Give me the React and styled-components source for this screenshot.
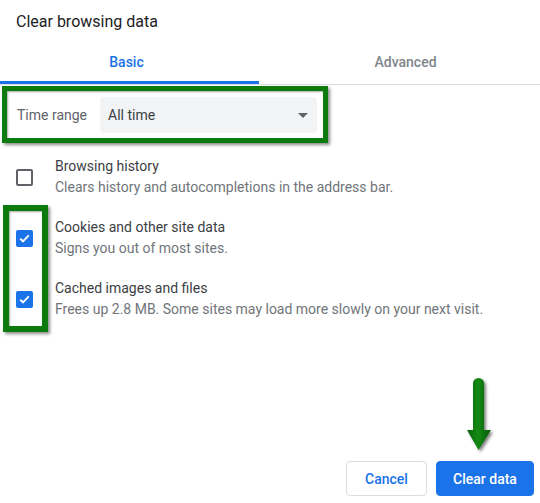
import React from 'react';
import styled, { createGlobalStyle } from 'styled-components';

const GlobalStyle = createGlobalStyle`
  body {
    margin: 0;
    background: #ffffff;
    font-family: Roboto, 'Liberation Sans', sans-serif;
  }
`;

const Dialog = styled.div`
  position: relative;
  width: 540px;
  height: 503px;
  display: flex;
  flex-direction: column;
  background: #ffffff;
  overflow: hidden;
`;

const Title = styled.h1`
  margin: 0;
  padding: 12px 16px 0;
  font-size: 16px;
  line-height: 20px;
  font-weight: 400;
  color: #202124;
`;

const TabBar = styled.div`
  display: flex;
  margin-top: 7px;
  border-bottom: 1px solid #dadce0;
`;

const Tab = styled.div`
  width: ${(props) => props.width};
  flex: ${(props) => (props.grow ? 1 : 'none')};
  height: 45px;
  box-sizing: border-box;
  padding: ${(props) => props.pad};
  display: flex;
  align-items: center;
  justify-content: center;
  font-size: 14px;
  font-weight: 500;
  color: ${(props) => (props.active ? '#1a73e8' : '#80868b')};
  box-shadow: ${(props) => (props.active ? 'inset 0 -3px 0 #1a73e8' : 'none')};
`;

const Highlight = styled.div`
  box-sizing: border-box;
  border: 5px solid #0d7a0d;
  box-shadow: 2px 2px 3px rgba(0, 0, 0, 0.45), inset 1px 1px 2px rgba(0, 0, 0, 0.35);
`;

const RangeRow = styled(Highlight)`
  width: 326px;
  margin: 1px 0 0 2px;
  padding: 6px 6px 5px 10px;
  display: flex;
  align-items: center;
`;

const RangeLabel = styled.span`
  width: 83px;
  font-size: 14px;
  color: #5f6368;
`;

const Select = styled.div`
  flex: 1;
  height: 36px;
  border-radius: 4px;
  background: #f1f3f4;
  display: flex;
  align-items: center;
  justify-content: space-between;
  padding: 0 9px 0 8px;
  font-size: 14px;
  color: #3c4043;
`;

const Caret = styled.span`
  width: 0;
  height: 0;
  border-left: 5px solid transparent;
  border-right: 5px solid transparent;
  border-top: 5px solid #5f6368;
`;

const List = styled.div`
  position: relative;
  margin-top: 13px;
`;

const Row = styled.div`
  display: flex;
  height: 61px;
  align-items: flex-start;
`;

const BoxCell = styled.div`
  width: 55px;
  height: 42px;
  display: flex;
  align-items: center;
  padding-left: 16px;
  box-sizing: border-box;
`;

const Box = styled.div`
  width: 17px;
  height: 17px;
  box-sizing: border-box;
  border-radius: 2px;
  border: ${(props) => (props.checked ? 'none' : '2px solid #5f6368')};
  background: ${(props) => (props.checked ? '#1a73e8' : 'transparent')};
  display: flex;
  align-items: center;
  justify-content: center;
`;

const RowText = styled.div`
  display: flex;
  flex-direction: column;
`;

const RowTitle = styled.span`
  font-size: 14px;
  line-height: 20px;
  color: #3c4043;
`;

const RowSub = styled.span`
  font-size: 14px;
  line-height: 22px;
  color: #70757a;
`;

const CheckHighlight = styled(Highlight)`
  position: absolute;
  left: 3px;
  top: 49px;
  width: 45px;
  height: 127px;
  border-width: 6px;
`;

const Footer = styled.div`
  margin-top: auto;
  display: flex;
  justify-content: flex-end;
  gap: 9px;
  padding: 0 6px 7px 0;
`;

const Button = styled.button`
  height: 35px;
  width: ${(props) => props.width};
  border-radius: 4px;
  font-family: Roboto, 'Liberation Sans', sans-serif;
  font-size: 14px;
  font-weight: 500;
  border: 1px solid ${(props) => (props.primary ? '#1a73e8' : '#dadce0')};
  background: ${(props) => (props.primary ? '#1a73e8' : '#ffffff')};
  color: ${(props) => (props.primary ? '#ffffff' : '#1a73e8')};
`;

const Arrow = styled.svg`
  position: absolute;
  left: 464px;
  top: 375px;
  filter: drop-shadow(2px 2px 1.5px rgba(0, 0, 0, 0.5));
`;

const items = [
  { title: 'Browsing history', sub: 'Clears history and autocompletions in the address bar.', checked: false },
  { title: 'Cookies and other site data', sub: 'Signs you out of most sites.', checked: true },
  { title: 'Cached images and files', sub: 'Frees up 2.8 MB. Some sites may load more slowly on your next visit.', checked: true },
];

const Check = () => (
  <svg width="11" height="9" viewBox="0 0 11 9">
    <path d="M1.2 4.6 L4 7.3 L9.8 1.4" fill="none" stroke="#ffffff" strokeWidth="1.9" />
  </svg>
);

const App = () => (
  <Dialog>
    <GlobalStyle />
    <Title>Clear browsing data</Title>
    <TabBar>
      <Tab active width="259px" pad="0 6px 0 0">Basic</Tab>
      <Tab grow pad="0 0 0 12px">Advanced</Tab>
    </TabBar>
    <RangeRow>
      <RangeLabel>Time range</RangeLabel>
      <Select>
        All time
        <Caret />
      </Select>
    </RangeRow>
    <List>
      {items.map((item) => (
        <Row key={item.title}>
          <BoxCell>
            <Box checked={item.checked}>{item.checked && <Check />}</Box>
          </BoxCell>
          <RowText>
            <RowTitle>{item.title}</RowTitle>
            <RowSub>{item.sub}</RowSub>
          </RowText>
        </Row>
      ))}
      <CheckHighlight />
    </List>
    <Footer>
      <Button width="81px">Cancel</Button>
      <Button primary width="98px">Clear data</Button>
    </Footer>
    <Arrow width="32" height="80" viewBox="0 0 32 80">
      <defs>
        <linearGradient id="arrowFill" x1="0" x2="1" y1="0" y2="0">
          <stop offset="0" stopColor="#086308" />
          <stop offset="0.45" stopColor="#138a13" />
          <stop offset="1" stopColor="#075a07" />
        </linearGradient>
      </defs>
      <path
        d="M9 8.5 A5.5 5.5 0 0 1 20 8.5 L20 55 L27 55 L14.5 75 L3 55 L9 55 Z"
        fill="url(#arrowFill)"
      />
    </Arrow>
  </Dialog>
);

export default App;
